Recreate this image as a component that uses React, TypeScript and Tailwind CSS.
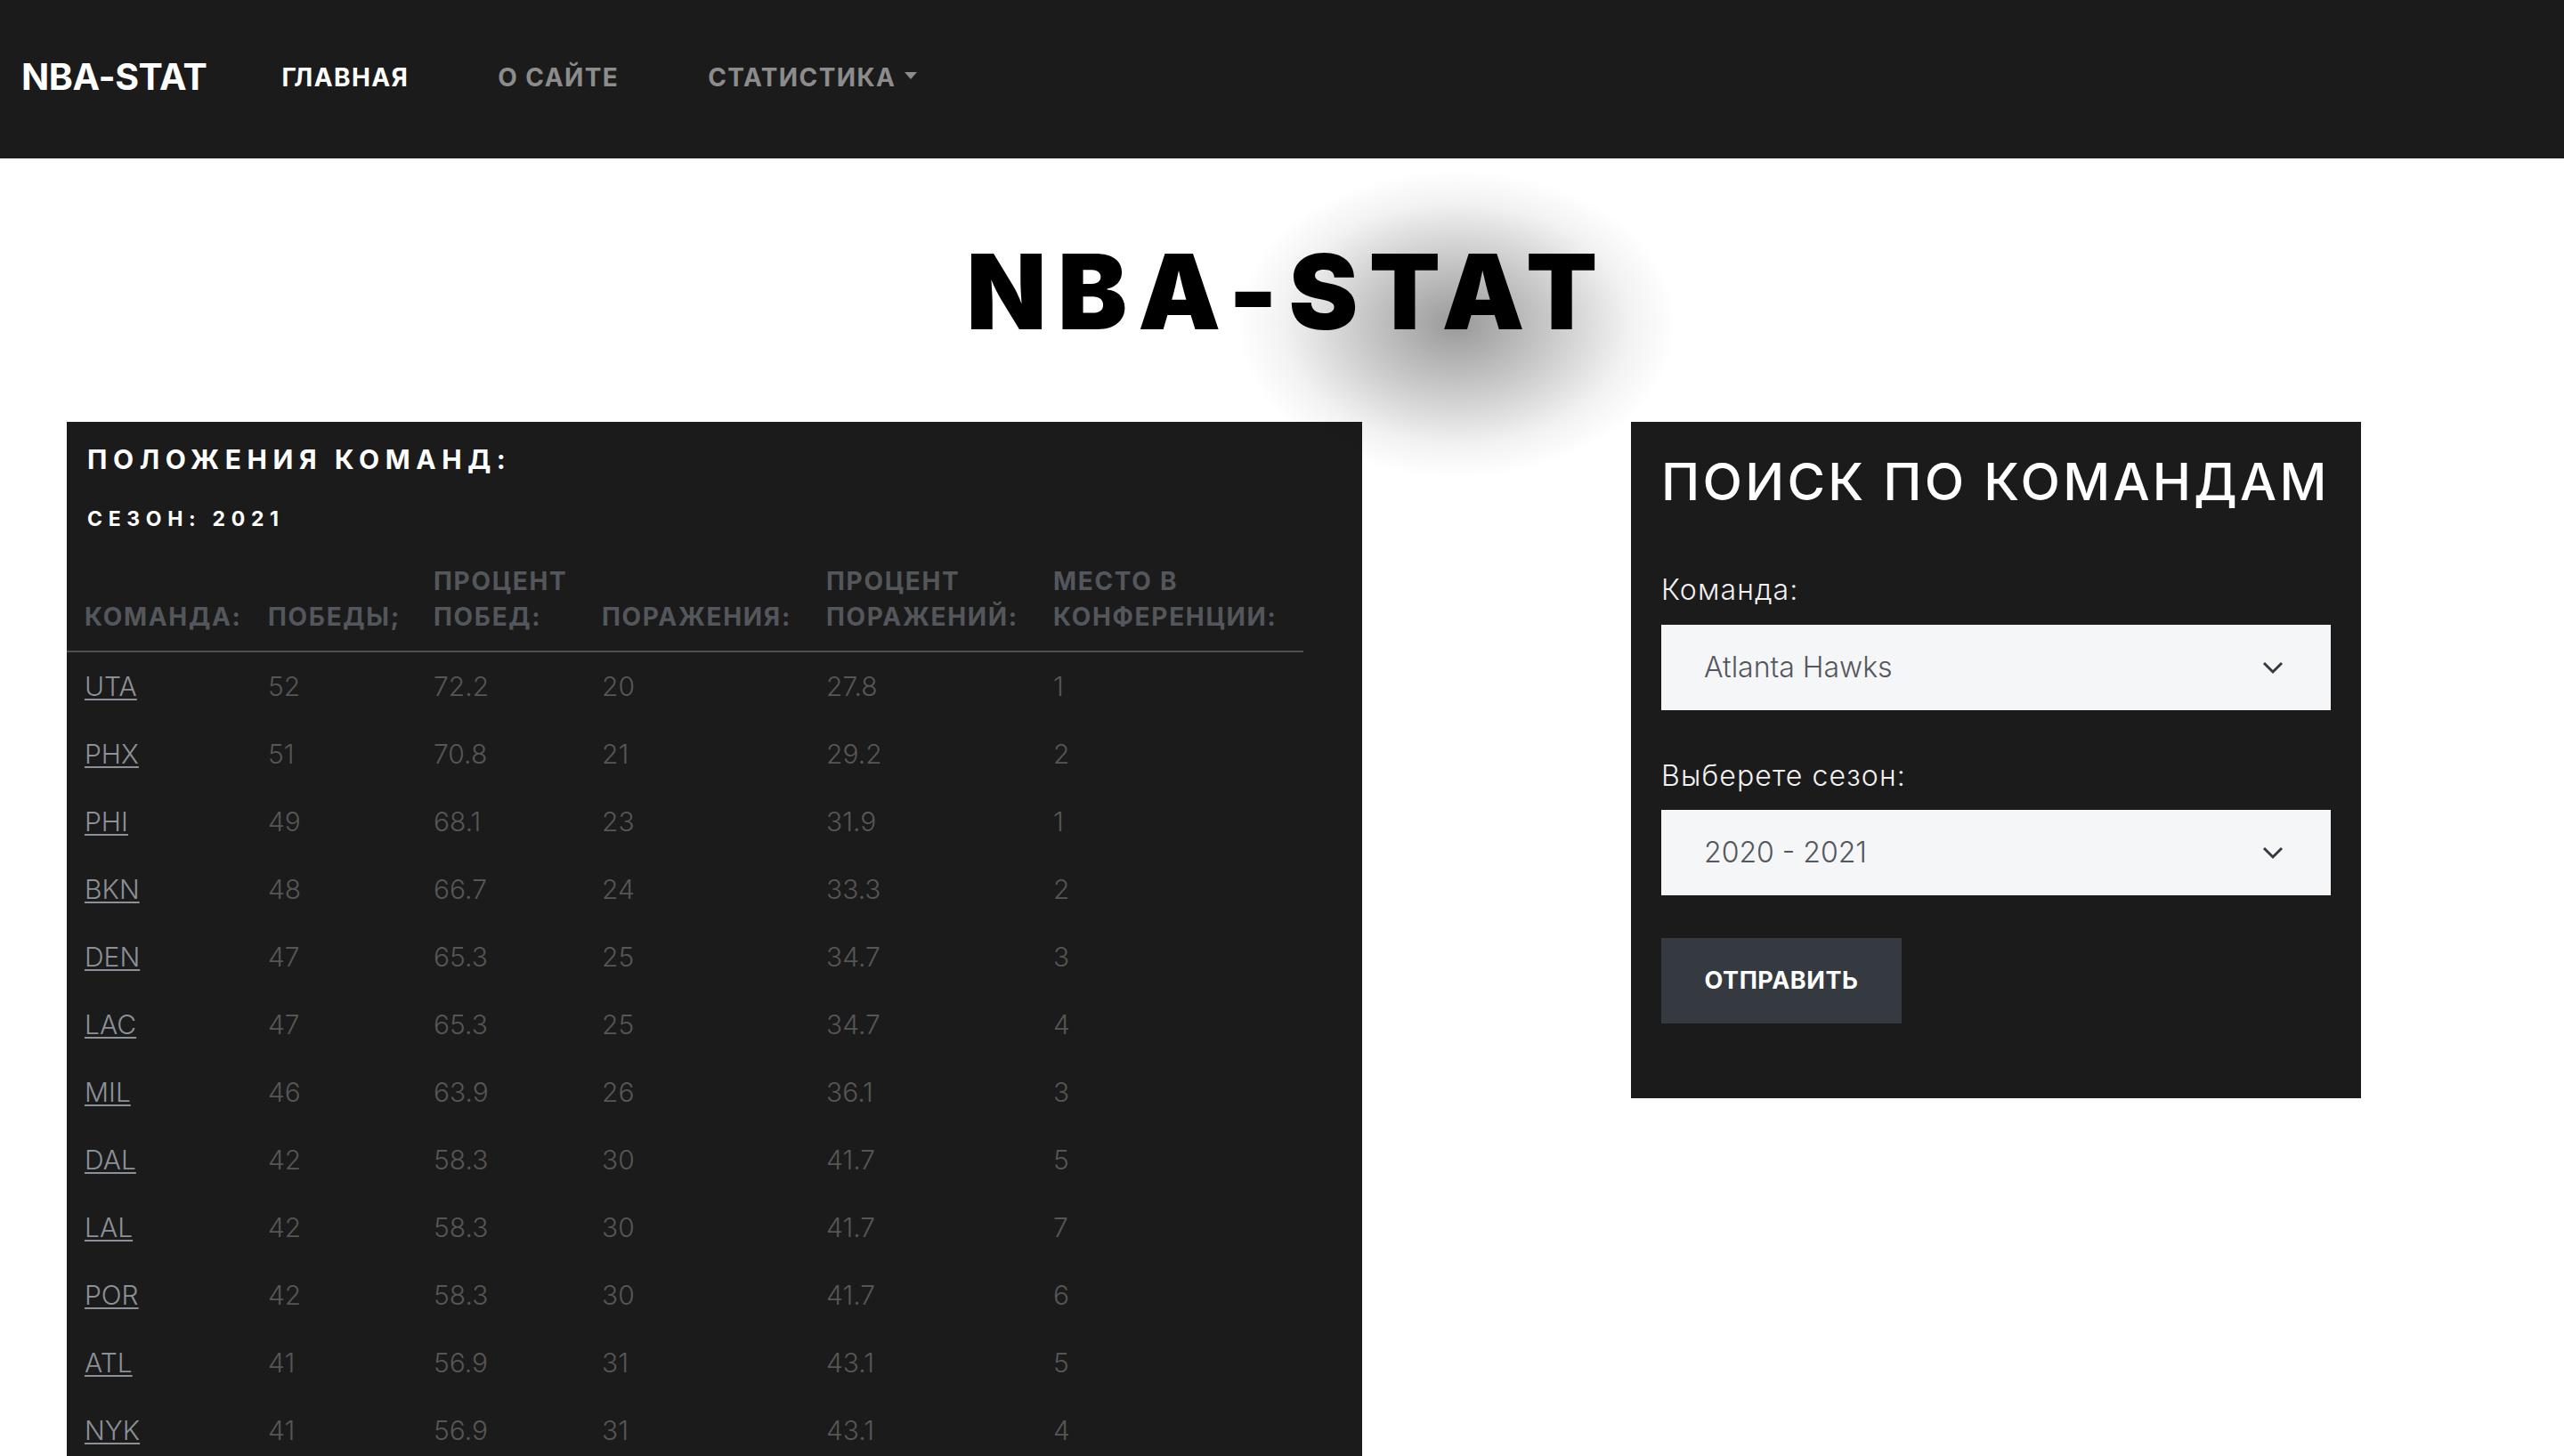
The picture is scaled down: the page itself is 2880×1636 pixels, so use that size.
import React from "react";

const standings: [string, number, string, number, string, number][] = [
  ["UTA", 52, "72.2", 20, "27.8", 1],
  ["PHX", 51, "70.8", 21, "29.2", 2],
  ["PHI", 49, "68.1", 23, "31.9", 1],
  ["BKN", 48, "66.7", 24, "33.3", 2],
  ["DEN", 47, "65.3", 25, "34.7", 3],
  ["LAC", 47, "65.3", 25, "34.7", 4],
  ["MIL", 46, "63.9", 26, "36.1", 3],
  ["DAL", 42, "58.3", 30, "41.7", 5],
  ["LAL", 42, "58.3", 30, "41.7", 7],
  ["POR", 42, "58.3", 30, "41.7", 6],
  ["ATL", 41, "56.9", 31, "43.1", 5],
  ["NYK", 41, "56.9", 31, "43.1", 4],
];

const Navbar = () => (
  <nav className="flex h-[178px] items-center bg-[#1b1b1b] pb-[5px] pl-[24px]">
    <a className="text-[41px] leading-none font-bold tracking-[-0.01em] text-white">NBA-STAT</a>
    <ul className="ml-[34px] flex items-center text-[28px] leading-none font-bold tracking-[0.05em]">
      <li className="px-[50px] text-white">ГЛАВНАЯ</li>
      <li className="px-[50px] text-[#8c8c8c]">О САЙТЕ</li>
      <li className="flex items-center px-[50px] text-[#8c8c8c]">
        СТАТИСТИКА
        <span className="ml-[10px] mb-[3px] h-0 w-0 border-x-[7px] border-t-[8px] border-x-transparent border-t-[#8c8c8c]" />
      </li>
    </ul>
  </nav>
);

const Chevron = () => (
  <svg width="24" height="16" viewBox="0 0 24 16" fill="none">
    <polyline points="2,3 12,13 22,3" stroke="#343a40" strokeWidth="3" />
  </svg>
);

const StandingsCard = () => (
  <section className="h-[1162px] w-[1455px] shrink-0 bg-[#1b1b1b] pt-[24px]">
    <h2 className="px-[23px] text-[30px] leading-[36px] font-bold tracking-[0.22em] text-white">
      ПОЛОЖЕНИЯ КОМАНД:
    </h2>
    <h3 className="mt-[35px] px-[23px] text-[23px] leading-[28px] font-bold tracking-[0.29em] text-white">
      СЕЗОН: 2021
    </h3>
    <table className="mt-[18px] w-[1389px] table-fixed border-collapse">
      <colgroup>
        <col className="w-[206px]" />
        <col className="w-[186px]" />
        <col className="w-[189px]" />
        <col className="w-[252px]" />
        <col className="w-[255px]" />
        <col className="w-[301px]" />
      </colgroup>
      <thead>
        <tr className="border-b-2 border-[#4f4f4f] text-left align-bottom text-[28px] leading-[40px] font-bold tracking-[0.06em] text-[#53575b]">
          <th className="px-[20px] py-[18px]">КОМАНДА:</th>
          <th className="px-[20px] py-[18px]">ПОБЕДЫ;</th>
          <th className="px-[20px] py-[18px]">ПРОЦЕНТ ПОБЕД:</th>
          <th className="px-[20px] py-[18px]">ПОРАЖЕНИЯ:</th>
          <th className="px-[20px] py-[18px]">ПРОЦЕНТ ПОРАЖЕНИЙ:</th>
          <th className="px-[20px] py-[18px]">МЕСТО В КОНФЕРЕНЦИИ:</th>
        </tr>
      </thead>
      <tbody>
        {standings.map(([team, wins, winPct, losses, lossPct, place]) => (
          <tr key={team} className="text-[30px] leading-[40px] font-light text-[#565656]">
            <td className="px-[20px] pt-[18px] pb-[18px]">
              <a className="text-[#8c9198] underline decoration-[2px] underline-offset-[3px]">{team}</a>
            </td>
            <td className="px-[20px] py-[18px]">{wins}</td>
            <td className="px-[20px] py-[18px]">{winPct}</td>
            <td className="px-[20px] py-[18px]">{losses}</td>
            <td className="px-[20px] py-[18px]">{lossPct}</td>
            <td className="px-[20px] py-[18px]">{place}</td>
          </tr>
        ))}
      </tbody>
    </table>
  </section>
);

const SearchCard = () => (
  <section className="h-[760px] w-[820px] shrink-0 bg-[#1b1b1b] px-[34px] pt-[32px]">
    <h2 className="text-[58px] leading-[70px] font-medium tracking-[0.057em] text-white">ПОИСК ПО КОМАНДАМ</h2>
    <label className="mt-[63px] block text-[32px] leading-[48px] font-light tracking-[0.035em] text-[#f2f2f2]">
      Команда:
    </label>
    <div className="mt-[15px] flex h-[96px] items-center justify-between bg-[#f5f6f8] pr-[53px] pl-[48px] text-[32px] font-light text-[#54575c]">
      <span>Atlanta Hawks</span>
      <Chevron />
    </div>
    <label className="mt-[50px] block text-[32px] leading-[48px] font-light tracking-[0.035em] text-[#f2f2f2]">
      Выберете сезон:
    </label>
    <div className="mt-[14px] flex h-[96px] items-center justify-between bg-[#f5f6f8] pr-[53px] pl-[48px] text-[32px] font-light text-[#54575c]">
      <span>2020 - 2021</span>
      <Chevron />
    </div>
    <button className="mt-[48px] flex h-[96px] w-[270px] items-center justify-center bg-[#343a40] text-[27px] font-bold tracking-[0.02em] text-white">
      ОТПРАВИТЬ
    </button>
  </section>
);

export default function App() {
  return (
    <div className="h-[1636px] overflow-hidden bg-white font-['Inter',sans-serif]">
      <Navbar />
      <main>
        <div className="flex justify-center pt-[91px]">
          <div className="relative">
            <span className="absolute top-[-80px] left-[300px] h-[350px] w-[500px] bg-[radial-gradient(ellipse_at_center,rgba(0,0,0,0.4)_0%,rgba(0,0,0,0.2)_32%,rgba(0,0,0,0.05)_55%,rgba(0,0,0,0)_70%)]" />
            <h1 className="relative mr-[-0.105em] text-[117px] leading-none font-black tracking-[0.105em] text-black">
              NBA-STAT
            </h1>
          </div>
        </div>
        <div className="mt-[88px] flex items-start gap-[302px] pl-[75px]">
          <StandingsCard />
          <SearchCard />
        </div>
      </main>
    </div>
  );
}
